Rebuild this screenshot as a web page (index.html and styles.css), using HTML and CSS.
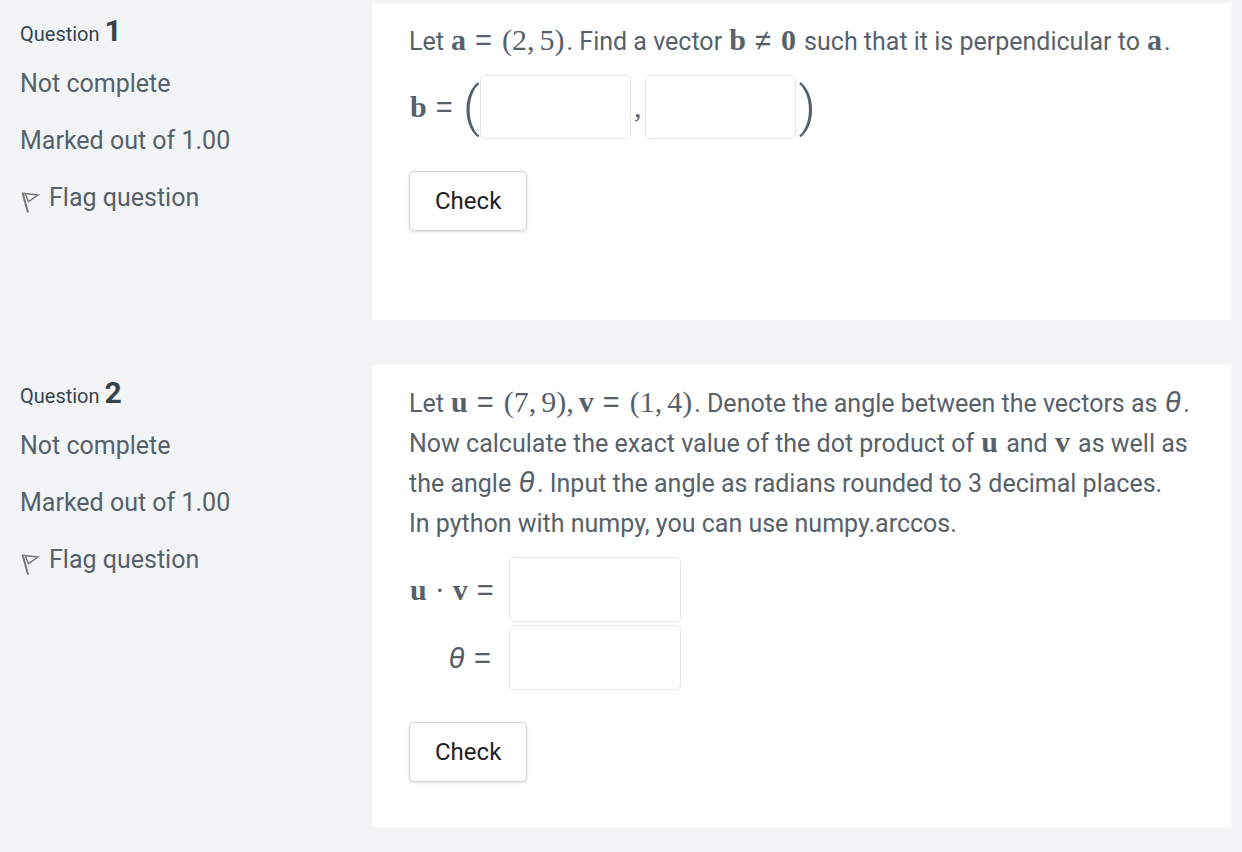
FILE: index.html
```html
<!DOCTYPE html>
<html lang="en">
<head>
<meta charset="utf-8">
<meta name="viewport" content="width=device-width, initial-scale=1">
<title>Vector quiz</title>
<link rel="stylesheet" href="styles.css">
</head>
<body>
<main class="quiz">
  <section class="question">
    <div class="info">
      <h2 class="info-title">Question <span class="info-number">1</span></h2>
      <p class="info-line">Not complete</p>
      <p class="info-line">Marked out of 1.00</p>
      <a class="info-line flag" href="#">
        <svg class="flag-icon" viewBox="0 0 20 24" aria-hidden="true"><path d="M2.500 3.500 8 23.500" stroke="#777" stroke-width="2" fill="none"/><path d="M5 4.500 18 6 8.500 12.500Z" stroke="#777" stroke-width="1.500" fill="none"/></svg>
        <span>Flag question</span>
      </a>
    </div>
    <form class="content">
      <p class="prompt">Let <span class="math"><b>a</b><span class="rel">=</span>(2<span class="sep">,</span>5)</span>. Find a vector <span class="math"><b>b</b><span class="rel">≠</span><b>0</b></span> such that it is perpendicular to <span class="math"><b>a</b></span>.</p>
      <div class="vector">
        <span class="math"><b>b</b><span class="rel">=</span></span>
        <span class="paren">(</span>
        <input class="field" type="text" aria-label="First component of b">
        <span class="math comma">,</span>
        <input class="field" type="text" aria-label="Second component of b">
        <span class="paren close">)</span>
      </div>
      <button class="check" type="button">Check</button>
    </form>
  </section>

  <section class="question">
    <div class="info">
      <h2 class="info-title">Question <span class="info-number">2</span></h2>
      <p class="info-line">Not complete</p>
      <p class="info-line">Marked out of 1.00</p>
      <a class="info-line flag" href="#">
        <svg class="flag-icon" viewBox="0 0 20 24" aria-hidden="true"><path d="M2.500 3.500 8 23.500" stroke="#777" stroke-width="2" fill="none"/><path d="M5 4.500 18 6 8.500 12.500Z" stroke="#777" stroke-width="1.500" fill="none"/></svg>
        <span>Flag question</span>
      </a>
    </div>
    <form class="content">
      <p class="prompt">Let <span class="math"><b>u</b><span class="rel">=</span>(7<span class="sep">,</span>9)<span class="sep">,</span><b>v</b><span class="rel">=</span>(1<span class="sep">,</span>4)</span>. Denote the angle between the vectors as <span class="math"><i>θ</i></span>. Now calculate the exact value of the dot product of <span class="math"><b>u</b></span> and <span class="math"><b>v</b></span> as well as the angle <span class="math"><i>θ</i></span>. Input the angle as radians rounded to 3 decimal places.<br>In python with numpy, you can use numpy.arccos.</p>
      <div class="answers">
        <label class="math" for="dot"><b>u</b><span class="dot">·</span><b>v</b><span class="rel">=</span></label>
        <input class="field wide" id="dot" type="text">
        <label class="math" for="theta"><i>θ</i><span class="rel">=</span></label>
        <input class="field wide" id="theta" type="text">
      </div>
      <button class="check" type="button">Check</button>
    </form>
  </section>
</main>
</body>
</html>
```

FILE: styles.css
```css
* { box-sizing: border-box; }
body {
  margin: 0;
  background: #f2f4f6;
  color: #56616a;
  font: 25px/40px Roboto, sans-serif;
}
p, h2 { margin: 0; }
.quiz {
  display: flex;
  flex-direction: column;
  gap: 45px;
  padding: 3px 11px 24px 20px;
}
.question {
  display: grid;
  grid-template-columns: 352px 1fr;
}
.info {
  display: flex;
  flex-direction: column;
  gap: 17px;
  padding-top: 15px;
}
.info-title {
  font-size: 20px;
  font-weight: 400;
  line-height: 26px;
  color: #37444b;
}
.info-number {
  font-size: 30px;
  font-weight: 700;
}
.info-line { color: #56616a; }
.flag {
  display: flex;
  gap: 9px;
  text-decoration: none;
}
.flag-icon {
  width: 20px;
  height: 24px;
  margin-top: 11px;
}
.content {
  background: #fff;
  padding: 19px 37px 45px;
}
.question:first-child .content { padding-bottom: 89px; }
.math {
  margin: 0 1px;
  font-family: "Liberation Serif", serif;
  font-size: 30px;
  line-height: 24px;
}
.prompt .math { margin: 0 2px 0 1px; }
.math i {
  font-family: Roboto, sans-serif;
}
.rel {
  margin: 0 9px;
  font-family: "Liberation Sans", sans-serif;
  font-size: 29px;
}
.prompt .rel { margin-right: 10px; }
.sep { margin-right: 5px; }
.dot { margin: 0 8px; }
.vector {
  display: flex;
  align-items: center;
  margin-top: 13px;
}
.vector .comma { margin: 0 4px 0 3px; }
.paren {
  font-weight: 300;
  font-size: 54px;
  line-height: 40px;
}
.close { margin-left: 2px; }
.field {
  width: 151px;
  height: 64px;
  border: 1px solid #e2e7ea;
  border-radius: 5px;
  background: #fff;
  padding: 0 16px;
  font: inherit;
  color: inherit;
}
.answers {
  display: grid;
  grid-template-columns: 92px 172px;
  column-gap: 8px;
  row-gap: 3px;
  align-items: center;
  margin-top: 13px;
}
.answers .math { text-align: right; }
.wide {
  width: 100%;
  height: 65px;
}
.check {
  display: block;
  margin-top: 32px;
  height: 60px;
  padding: 0 25px;
  border: 1px solid #ced4da;
  border-radius: 5px;
  background: #fff;
  box-shadow: 0 1px 3px rgba(0, 0, 0, 0.15);
  color: #1d2125;
  font: 24px/40px Roboto, sans-serif;
}
```
